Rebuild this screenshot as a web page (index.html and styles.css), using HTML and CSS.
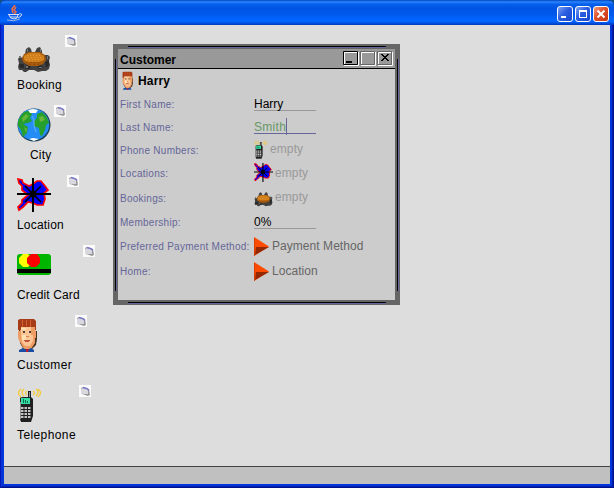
FILE: index.html
```
<!DOCTYPE html>
<html lang="en">
<head>
<meta charset="utf-8">
<title>Bookings</title>
<link rel="stylesheet" href="styles.css">
</head>
<body>
<svg class="defs" width="0" height="0" aria-hidden="true">
  <defs>
    <symbol id="crab" viewBox="0 0 34 34">
      <path fill="#414141" d="M8 11l1-5 3-2 2 2 1 4 3-1 2-4 3-1 2 4v4l2 2 1-2h3l2 2-1 4 1 4-1 4-3 2h-4l-4 1-4-2h-5l-3 2H7l-2-2H2l-1-3 1-4-1-4 2-3 2 2z"/>
      <path fill="#292929" d="M2 21h5v4H3zM10 21l4 1-1 4H8zM20 22h4l3 3-5 1zM28 19l4-2v5l-3 3z"/>
      <path fill="#777" d="M10 6h1v3h-1zM23 6h1v3h-1zM2 13h2v2H2zM30 13h1v3h-1zM9 23h2v2H9zM22 24h3v1h-3z"/>
      <path fill="#a65a0c" d="M5 15l2-4 5-2h11l5 3 1 5-3 4-5 2H12l-6-4z"/>
      <path fill="#d0801c" d="M7 13l5-3h10l5 3v4l-5 2H11l-4-2z"/>
      <path stroke="#eb9a34" stroke-dasharray="1 2" d="M10 12.500h14M8 14.500h18M9 16.500h17"/>
      <path stroke="#9a4d0c" stroke-dasharray="2 2" d="M9 19.500h16M12 21.500h11"/>
    </symbol>
    <symbol id="globe" viewBox="0 0 34 34">
      <circle cx="17" cy="17" r="16.500" fill="#173e54"/>
      <circle cx="16.500" cy="16.500" r="15.700" fill="#248cf5"/>
      <path fill="#25a02c" d="M3 9l4-5 5-1 3 3-2 4 2 3-4 2-5 1 5 3-1 6-4 4-2-7-3-4V13zM20 6l5-2 5 5 2 6-3 2-1 5-3 6-2-1-1-7-5-2v-5l3-3z"/>
      <path fill="#69b63b" d="M5 10l4-4 3 2-3 3-3 3zM22 9l4-1 2 4-5 2zM7 19l3 2-1 4z"/>
      <path fill="#fff" d="M11 2l5-1 5 1-2 3h-6zM12 31l4-1 6 1-5 2z"/>
      <path fill="none" stroke="#65b6ff" d="M15 8l2 4v6l2 6"/>
    </symbol>
    <symbol id="compass" viewBox="0 0 34 34">
      <path fill="#00f" stroke="#f00" stroke-width="1.700" d="M1 1l4 1 1 3 6 3 4-2 4-3h4l4 5 3 4-4 3 1 6-2 6h-6l-4-2-5-1-5 5-4 3-1-3 4-4v-3l6-5-6-5V8L2 5z"/>
      <path fill="none" stroke="#000" stroke-width="1.600" d="M8 8l16 16M24 8L8 24"/>
      <circle cx="16" cy="16" r="3.500" fill="#000"/>
      <path stroke="#000" stroke-width="2" d="M0 16h34M16 0v34"/>
    </symbol>
    <symbol id="card" viewBox="0 0 34 34">
      <rect y="6" width="34" height="21" rx="3" fill="#00b500"/>
      <path shape-rendering="crispEdges" fill="#000" d="M0 21h34v4H0z"/>
      <path fill="#ff0" d="M6 6h5l4 4v5l-4 4H6l-4-4v-5z"/>
      <path fill="red" d="M14 6h6l3 4v5l-4 4h-5l-4-4v-5z"/>
    </symbol>
    <symbol id="face" viewBox="0 0 22 34">
      <path fill="#49301e" d="M2 12l18 1v8l-1 6-5 5H7l-4-7z"/>
      <path fill="#ed9c62" d="M1 13h2V8h15v5h1v7h-1v5l-4 6H7l-4-7-2-4z"/>
      <path fill="#fcc596" d="M4 9h10v8h2v6l-3 5H8l-3-4-1-7z"/>
      <path fill="#ffe0b1" d="M4 10h5v2H4zM5 17h4v5H5z"/>
      <path fill="#a63c18" d="M1 12V2l2-1h14l2 2v9h-1V9H4v3z"/>
      <path stroke="#d66030" d="M5.500 2v7M9.500 2v6M13.500 2v7"/>
      <path fill="#544034" d="M6 13h2v2H6zM12 13h2v2h-2z"/>
      <path fill="#d9844f" d="M9 18h3v1H9z"/>
      <path fill="#c05438" d="M7 22h6v1h-1v1H8v-1H7z"/>
      <path fill="#174da2" d="M2 32l4-2 4 2 4-2 3 2v2H2z"/>
      <path fill="#b61a35" d="M9 31h3l-1 3H9z"/>
    </symbol>
    <symbol id="phone" viewBox="0 0 26 34">
      <path fill="none" stroke="#f3c934" stroke-width="1.300" d="M4 1Q-1 5 4 9M7 1Q3 5 7 8M19 1q4 3 0 7M21 1q5 4 0 8M10 3q-3 2 0 4M16 3q3 2 0 4"/>
      <path fill="#202020" d="M3 10l2-1h6V3h3v6l2 2v17l-2 6H4l-1-3z"/>
      <path fill="#8d8d8d" d="M3 14h1v17H3zM12 4h1v5h-1z"/>
      <path fill="#35dda0" d="M4 10h9v6H4z"/>
      <path fill="none" stroke="#096c52" d="M6.500 11v4M8.500 12v3M10.500 13v2"/>
      <path fill="none" stroke="#c4c4c4" stroke-width="2" stroke-dasharray="2.500 1" d="M4 20h10M4 23h10M4 26h10M4 29h10"/>
    </symbol>
    <symbol id="tag" viewBox="0 0 12 12">
      <path fill="#fbfbfb" d="M0 0h12v12H0z"/>
      <path fill="#999" d="M2 3l2-1 6 2 1 6-2 1-6-2-1-2z"/>
      <path fill="#d8d8de" d="M2 4l2-1 5 2v4H4L2 8z"/>
      <path stroke="#7777cc" stroke-width="1.300" fill="none" d="M4 2.500l4 1 2 2"/>
    </symbol>
    <symbol id="arrow" viewBox="0 0 15 19">
      <path fill="#ff4b00" d="M0 0l15 9.500L0 19z"/>
      <path fill="#942800" d="M2 10h13L1 18z"/>
      <path fill="#d94000" d="M0 1h1v18H0z"/>
    </symbol>
  </defs>
</svg>
<div class="app">
  <header class="app-bar">
    <svg class="java" viewBox="0 0 16 17">
      <path fill="none" stroke="#f16c42" stroke-width="1.500" d="M8 0L5 4l1 4M9 2L7 5l2 2-2 2"/>
      <path fill="none" stroke="#d6dcf0" d="M1 9.500h11M2 10q1 4 5 4t4-4M12 9q4-1 2 2l-3 2M3 12h7"/>
      <path fill="none" stroke="#9daee4" d="M0 15q7 2 13-1"/>
    </svg>
    <div class="app-buttons">
      <svg class="xp" viewBox="0 0 14 14"><path fill="#fff" d="M3 9h5v2H3z"/></svg>
      <svg class="xp" viewBox="0 0 14 14"><path fill="#fff" fill-rule="evenodd" d="M3 3h8v8H3zM4 5v5h6V5z"/></svg>
      <svg class="xp xp-close" viewBox="0 0 14 14"><path stroke="#fff" stroke-width="2" d="M3.500 3.500l7 7M10.500 3.500l-7 7"/></svg>
    </div>
  </header>
  <main class="desktop">
    <nav class="icons">
      <div class="item"><svg class="icon"><use href="#crab"/></svg><svg class="tag"><use href="#tag"/></svg><span class="name">Booking</span></div>
      <div class="item city"><svg class="icon"><use href="#globe"/></svg><svg class="tag"><use href="#tag"/></svg><span class="name">City</span></div>
      <div class="item"><svg class="icon"><use href="#compass"/></svg><svg class="tag"><use href="#tag"/></svg><span class="name">Location</span></div>
      <div class="item card"><svg class="icon"><use href="#card"/></svg><svg class="tag"><use href="#tag"/></svg><span class="name">Credit Card</span></div>
      <div class="item wide"><svg class="icon icon-face"><use href="#face"/></svg><svg class="tag"><use href="#tag"/></svg><span class="name">Customer</span></div>
      <div class="item wide"><svg class="icon icon-phone"><use href="#phone"/></svg><svg class="tag"><use href="#tag"/></svg><span class="name">Telephone</span></div>
    </nav>
    <section class="window">
      <i class="groove groove-top"></i><i class="groove groove-bottom"></i>
      <i class="groove groove-left"></i><i class="groove groove-right"></i>
      <div class="title">
        <span>Customer</span>
        <div class="title-buttons">
          <svg class="wb" viewBox="0 0 16 15"><path fill="none" stroke="#fff" d="M1.500 13V1.500H14M15.500 1v13.500H1"/><path fill="none" stroke="#000" d="M.5.500h14v13H.500z"/><path d="M3 10h6v2H3z"/></svg>
          <svg class="wb" viewBox="0 0 16 15"><path fill="none" stroke="#fff" d="M1.500 13V1.500H14M15.500 1v13.500H1"/><path fill="none" stroke="#666" d="M.5.500h14v13H.500z"/></svg>
          <svg class="wb" viewBox="0 0 16 15"><path fill="none" stroke="#fff" d="M1.500 13V1.500H14M15.500 1v13.500H1"/><path fill="none" stroke="#666" d="M.5.500h14v13H.500z"/><path d="M4 3h2v1h1v1h2V4h1V3h2v1h-1v1h-1v1H9v1h1v1h1v1h1v1h-2V9H9V8H7v1H6v1H4V9h1V8h1V7h1V6H6V5H5V4H4z"/></svg>
        </div>
      </div>
      <div class="subject"><svg><use href="#face"/></svg><b>Harry</b></div>
      <div class="form">
        <label>First Name:</label><div class="value"><span class="field">Harry</span></div>
        <label>Last Name:</label><div class="value"><span class="field editing">Smith<i class="caret"></i></span></div>
        <label>Phone Numbers:</label><div class="value muted"><svg class="mini mini-phone"><use href="#phone"/></svg>empty</div>
        <label>Locations:</label><div class="value muted"><svg class="mini"><use href="#compass"/></svg>empty</div>
        <label>Bookings:</label><div class="value muted"><svg class="mini mini-crab"><use href="#crab"/></svg>empty</div>
        <label>Membership:</label><div class="value"><span class="field">0%</span></div>
        <label>Preferred Payment Method:</label><div class="value drop"><svg><use href="#arrow"/></svg><span>Payment Method</span></div>
        <label>Home:</label><div class="value drop"><svg><use href="#arrow"/></svg><span class="low">Location</span></div>
      </div>
    </section>
  </main>
  <footer class="status"></footer>
</div>
</body>
</html>
```
FILE: styles.css
```
* { box-sizing: border-box; }
body { margin: 0; font: 12px/14px "Liberation Sans", Arial, sans-serif; color: #000; }
svg { display: block; flex: none; }
.defs { position: absolute; }
.app {
  width: 614px; height: 488px; padding: 0 4px 4px;
  display: flex; flex-direction: column;
  background: #0036d9;
  box-shadow: inset 1px 0 #0019b8, inset -1px -1px #00138c, inset 2px 0 #0831d9, inset -2px -2px #001eb0;
  border-radius: 6px 6px 0 0;
}
html { background: #12507e; }
.app-bar {
  flex: none; height: 25px; margin: 0 -4px; padding: 5px 5px 0 7px;
  display: flex; justify-content: space-between;
  border-radius: 6px 6px 0 0;
  background: linear-gradient(#0047c2 0, #2d86fb 2px, #0560ee 4px, #0054e3 8px, #0058ec 14px, #0066ff 20px, #0060f8 22px, #0043cf 24px, #003ab5 25px);
}
.java { width: 16px; height: 17px; }
.app-buttons { display: flex; gap: 2px; padding-top: 1px; }
.xp {
  width: 16px; height: 16px; border: 1px solid #fff; border-radius: 3px;
  background: linear-gradient(135deg, #7fa4f5, #2b5de0 45%, #1746c9);
}
.xp-close { background: linear-gradient(135deg, #f09b80, #e0502a 45%, #c33611); }
.desktop { flex: 1; display: flex; align-items: flex-start; background: #ddd; }
.icons { width: 109px; padding: 10px 0 0 13px; display: flex; flex-direction: column; align-items: flex-start; }
.item { position: relative; height: 70px; display: flex; flex-direction: column; }
.icon { width: 34px; height: 34px; margin: 8px 0 1px; }
.item:not(:first-child) .icon { margin: 3px 0 6px; }
.item .icon-face { width: 22px; }
.item .icon-phone { width: 26px; }
.name { letter-spacing: .2px; white-space: nowrap; }
.wide .name { letter-spacing: .4px; }
.card .name { letter-spacing: .12px; }
.city .name { padding-left: 13px; width: 34px; }
.tag { position: absolute; left: calc(100% + 3px); top: 0; width: 12px; height: 12px; }
.window {
  position: relative; width: 287px; height: 261px; margin-top: 19px;
  border: 5px solid #666; background: #ccc;
}
.groove { position: absolute; background: #000; }
.groove-top, .groove-bottom { left: 10px; width: 258px; height: 1px; box-shadow: 0 1px #669; }
.groove-top { top: -3px; }
.groove-bottom { bottom: -3px; }
.groove-left, .groove-right { top: 10px; width: 1px; height: 232px; box-shadow: 1px 0 #669; }
.groove-left { left: -3px; }
.groove-right { right: -3px; }
.title {
  height: 20px; padding: 2px 2px 0; display: flex; justify-content: space-between;
  background: #999; border-bottom: 1px solid #000; font-weight: bold;
}
.title > span { padding-top: 2px; }
.title-buttons { display: flex; gap: 1px; }
.wb { width: 16px; height: 15px; }
.subject { height: 23px; padding-left: 4px; display: flex; align-items: center; gap: 4px; }
.subject svg { width: 12px; height: 19px; }
.subject b { letter-spacing: .15px; }
.form {
  padding-left: 2px; display: grid; grid-template-columns: 134px 1fr;
  grid-template-rows: 24px 23px 22px 25px 24px 24px 25px 24px; align-items: center;
}
.form label { font-size: 10px; letter-spacing: .27px; color: #669; white-space: nowrap; padding-top: 1px; }
.value { display: flex; align-items: center; }
.field { width: 62px; height: 13px; line-height: 13px; border-bottom: 1px solid #999; display: flex; }
.editing { color: #696; border-color: #669; letter-spacing: .3px; line-height: 12px; }
.caret { width: 1px; height: 17px; margin-top: -3px; background: #669; }
.muted { color: #999; gap: 2px; line-height: 12px; padding-bottom: 2px; letter-spacing: .1px; }
.mini { width: 19px; height: 19px; }
.mini-phone { width: 14px; }
.mini-crab { margin-top: 4px; }
.drop { color: #666; gap: 3px; letter-spacing: .05px; }
.drop span { padding-bottom: 2px; }
.drop .low { padding-bottom: 0; }
.drop svg { width: 15px; height: 19px; }
.status { flex: none; height: 18px; background: #c0c0c0; border-top: 1px solid #444; }
```
